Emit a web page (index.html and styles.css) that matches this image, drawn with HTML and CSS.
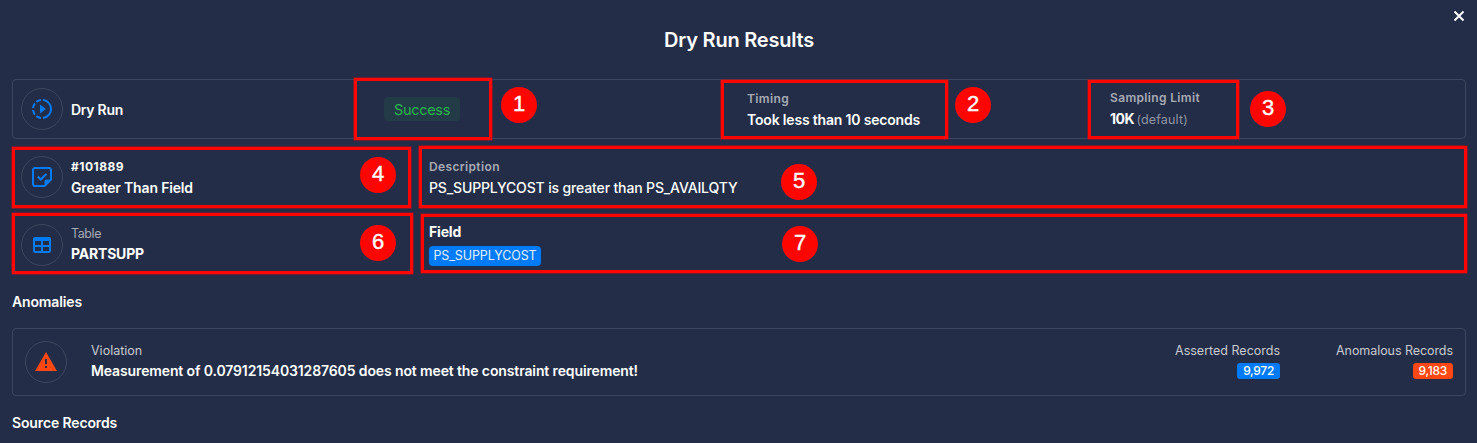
FILE: index.html
```
<!DOCTYPE html>
<html lang="en">
<head>
<meta charset="utf-8">
<title>Dry Run Results</title>
<link rel="stylesheet" href="styles.css">
</head>
<body>
<main class="dialog">
  <header class="header">
    <h1 class="title">Dry Run Results</h1>
    <button class="close" aria-label="Close">
      <svg width="12" height="12" viewBox="0 0 12 12"><path d="M1.5 1.5l9 9M10.5 1.5l-9 9" stroke="#fff" stroke-width="1.9"/></svg>
    </button>
  </header>

  <section class="card run">
    <div class="cell name">
      <span class="icon"><svg width="24" height="24" viewBox="0 0 24 24" fill="#007bf7"><path d="M13 2.05v2.02c3.95.49 7 3.85 7 7.93s-3.05 7.44-7 7.93v2.02c5.05-.5 9-4.76 9-9.95s-3.95-9.45-9-9.95zM11 2.05v2.02c-1.46.18-2.8.76-3.9 1.62L5.67 4.26C7.15 3.05 8.99 2.25 11 2.05zM5.69 7.1L4.26 5.67C3.05 7.15 2.25 8.99 2.05 11h2.02c.18-1.46.76-2.8 1.62-3.9zM4.07 13H2.05c.2 2.01 1 3.85 2.21 5.33l1.43-1.43C4.83 15.8 4.25 14.46 4.07 13zM5.67 19.74C7.15 20.95 9 21.75 11 21.95v-2.02c-1.46-.18-2.8-.76-3.9-1.62l-1.43 1.43zM10 7.5v9l6-4.5z"/></svg></span>
      <span class="value tight">Dry Run</span>
    </div>
    <div class="cell status"><span class="pill">Success</span></div>
    <div class="cell stack timing"><span class="label bold">Timing</span><span class="value took">Took less than 10 seconds</span></div>
    <div class="cell stack limit"><span class="label bold sampling">Sampling Limit</span><span class="value"><b class="amount">10K</b> <span class="note">(default)</span></span></div>
  </section>

  <section class="card check">
    <div class="cell name">
      <span class="icon"><svg width="24" height="24" viewBox="0 0 24 24" fill="none"><path d="M15 21H5a2 2 0 0 1-2-2V5a2 2 0 0 1 2-2h14a2 2 0 0 1 2 2v10" stroke="#007bf7" stroke-width="2"/><path d="M22 14.500V15l-7 7h-.5v-5.500a2 2 0 0 1 2-2z" fill="#007bf7"/><path d="M7.800 11.500l3 3 5.500-5.500" stroke="#007bf7" stroke-width="2.200"/></svg></span>
      <div class="stack"><span class="ident">#101889</span><span class="value">Greater Than Field</span></div>
    </div>
    <div class="cell stack"><span class="label bold">Description</span><span class="value medium">PS_SUPPLYCOST is greater than PS_AVAILQTY</span></div>
  </section>

  <section class="card check target">
    <div class="cell name">
      <span class="icon"><svg width="24" height="24" viewBox="0 0 24 24" fill="#007bf7"><path fill-rule="evenodd" d="M5 4h14a2 2 0 0 1 2 2v12a2 2 0 0 1-2 2H5a2 2 0 0 1-2-2V6a2 2 0 0 1 2-2zM5 8v4h6V8zM13 8v4h6V8zM5 14v4h6v-4zM13 14v4h6v-4z"/></svg></span>
      <div class="stack"><span class="label table">Table</span><span class="value strong">PARTSUPP</span></div>
    </div>
    <div class="cell stack field"><span class="value strong">Field</span><span class="chip">PS_SUPPLYCOST</span></div>
  </section>

  <h2 class="heading">Anomalies</h2>

  <section class="card violation">
    <span class="icon"><svg width="24" height="24" viewBox="0 0 24 24" fill="#ff4713"><path d="M13 14h-2V9h2m0 9h-2v-2h2M1 21h22L12 2z"/></svg></span>
    <div class="stack message"><span class="label light">Violation</span><span class="value measure">Measurement of 0.07912154031287605 does not meet the constraint requirement!</span></div>
    <div class="stack count"><span class="label light">Asserted Records</span><span class="badge blue">9,972</span></div>
    <div class="stack count"><span class="label light anomalous">Anomalous Records</span><span class="badge orange">9,183</span></div>
  </section>

  <h2 class="heading source">Source Records</h2>
</main>

<div class="outline o1"></div><div class="marker m1">1</div>
<div class="outline o2"></div><div class="marker m2">2</div>
<div class="outline o3"></div><div class="marker m3">3</div>
<div class="outline o4"></div><div class="marker m4">4</div>
<div class="outline o5"></div><div class="marker m5">5</div>
<div class="outline o6"></div><div class="marker m6">6</div>
<div class="outline o7"></div><div class="marker m7">7</div>
</body>
</html>
```
FILE: styles.css
```
* { box-sizing: border-box; }
body {
  margin: 0;
  height: 443px;
  overflow: hidden;
  background: #232d47;
  color: #fff;
  font-family: Inter, "Liberation Sans", sans-serif;
}
.dialog { padding: 0 11px 0 12px; display: flex; flex-direction: column; }
.header {
  height: 79px;
  display: grid;
  grid-template-columns: 1fr auto 1fr;
}
.title {
  grid-column: 2;
  margin: 28px 0 0;
  font-size: 20px;
  line-height: 24px;
  font-weight: 600;
  letter-spacing: -.22px;
}
.close {
  justify-self: end;
  align-self: start;
  margin: 10px 1px 0 0;
  padding: 0;
  border: 0;
  background: none;
  display: flex;
}
.card {
  border: 1px solid #3c465e;
  border-radius: 4px;
  display: grid;
}
.run { height: 60px; grid-template-columns: 363px 363px 363px 1fr; }
.check { height: 60px; margin-top: 8px; grid-template-columns: 408px 1fr; border-color: transparent; }
.target { margin-top: 7px; height: 61px; }
.cell { padding-left: 8px; align-self: center; }
.name { display: flex; align-items: center; gap: 8px; }
.icon {
  flex: none;
  width: 42px;
  height: 42px;
  border: 1px solid #3c465e;
  border-radius: 50%;
  display: flex;
  align-items: center;
  justify-content: center;
}
.stack { display: flex; flex-direction: column; align-items: flex-start; }
.value {
  font-size: 14px;
  line-height: 20px;
  font-weight: 600;
  letter-spacing: -.165px;
  white-space: nowrap;
}
.tight { letter-spacing: -.27px; padding-top: 2px; }
.took { letter-spacing: -.18px; }
.medium { font-weight: 500; letter-spacing: -.147px; }
.strong { font-weight: 700; letter-spacing: -.19px; }
.measure { letter-spacing: -.124px; }
.label {
  font-size: 12.5px;
  line-height: 20px;
  color: #a7abb5;
  white-space: nowrap;
}
.bold { font-size: 12px; line-height: 22px; font-weight: 600; letter-spacing: .36px; }
.sampling { letter-spacing: .34px; }
.light { color: #c8cbd1; }
.anomalous { letter-spacing: -.062px; }
.table { letter-spacing: -.43px; }
.ident { font-size: 12px; line-height: 22px; font-weight: 700; letter-spacing: .48px; }
.amount { letter-spacing: -.5px; font-weight: 700; }
.note { color: #8f95a3; font-size: 12.5px; font-weight: 400; letter-spacing: .16px; margin-left: -1px; }
.status { display: flex; }
.limit, .field { padding-bottom: 2px; }
.message, .count { padding-bottom: 2px; }
.target .name .stack { padding-bottom: 1px; }
.pill {
  width: 76px;
  height: 24px;
  border-radius: 4px;
  background: #233a47;
  color: #28b84b;
  font-size: 14.5px;
  line-height: 25px;
  letter-spacing: -.3px;
  text-align: center;
}
.chip {
  width: 112px;
  height: 20px;
  margin-top: 4px;
  border-radius: 4px;
  background: #007bf7;
  color: #e3efff;
  font-size: 12.5px;
  line-height: 20px;
  letter-spacing: -.114px;
  text-align: center;
}
.heading {
  margin: 17px 0 0;
  font-size: 14px;
  line-height: 20px;
  font-weight: 600;
  letter-spacing: -.14px;
}
.violation {
  height: 68px;
  margin-top: 16px;
  padding: 0 12px;
  grid-template-columns: 66px 1fr auto auto;
  align-items: center;
}
.count { align-items: flex-end; margin-left: 56px; }
.badge {
  height: 16px;
  margin: 2px 0;
  padding: 0 6px;
  border-radius: 3px;
  font-size: 12px;
  line-height: 16px;
  font-weight: 500;
  letter-spacing: -.3px;
}
.blue { background: #007bf7; }
.orange { background: #ff4713; }

/* Numbered callouts over the dialog */
.outline { position: absolute; border: 3px solid #ff0500; box-shadow: 0 0 0 .5px #b80f19; }
.o1 { left: 354px; top: 78px; width: 138px; height: 62px; }
.o2 { left: 721px; top: 80px; width: 227px; height: 59px; }
.o3 { left: 1088px; top: 80px; width: 151px; height: 59px; }
.o4 { left: 12px; top: 147px; width: 399px; height: 61px; }
.o5 { left: 419px; top: 146px; width: 1048px; height: 62px; }
.o6 { left: 12px; top: 213px; width: 401px; height: 61px; }
.o7 { left: 421px; top: 214px; width: 1046px; height: 59px; }
.marker {
  position: absolute;
  width: 36px;
  height: 36px;
  border-radius: 50%;
  background: #ff0500;
  font: 22px/34px "Liberation Sans", Arial, sans-serif;
  -webkit-text-stroke: .4px #fff;
  text-align: center;
}
.m1 { left: 501px; top: 87px; }
.m2 { left: 955px; top: 87px; }
.m3 { left: 1250px; top: 91px; }
.m4 { left: 360px; top: 157px; }
.m5 { left: 781px; top: 164px; }
.m6 { left: 360px; top: 225px; }
.m7 { left: 782px; top: 226px; }
```
